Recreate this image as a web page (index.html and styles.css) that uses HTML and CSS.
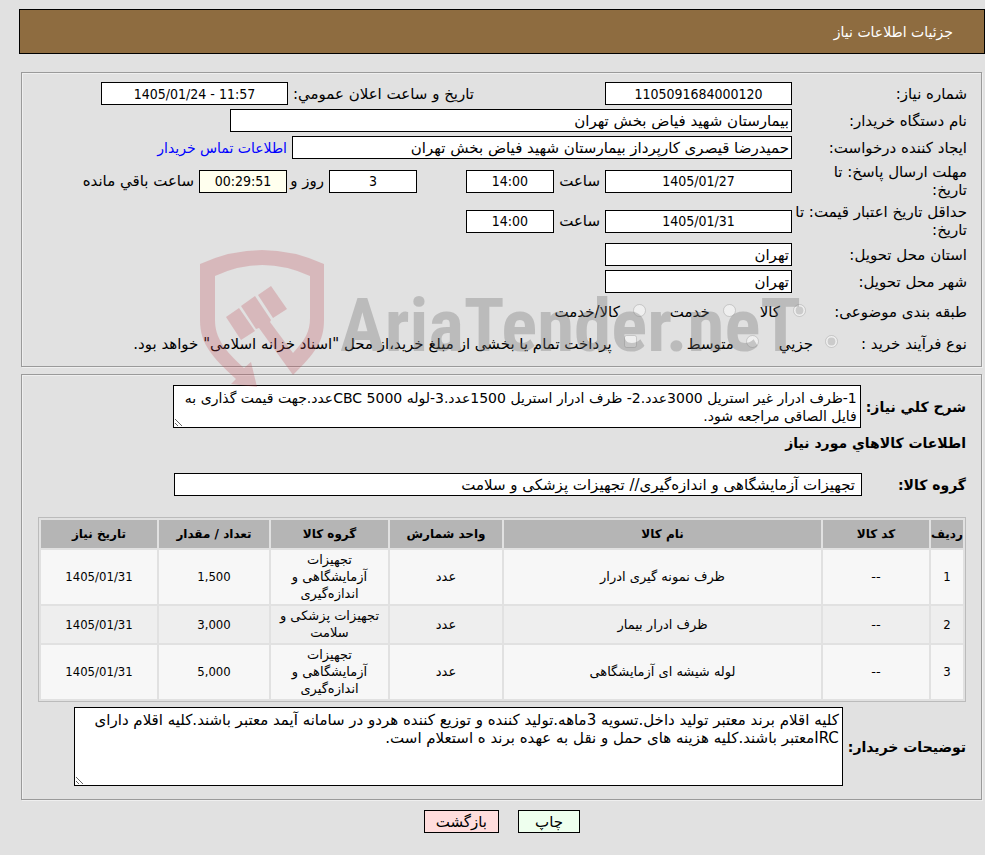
FILE: index.html
```html
<!DOCTYPE html>
<html lang="fa" dir="rtl">
<head>
    <meta charset="UTF-8">
    <meta name="viewport" content="width=device-width, initial-scale=1.0">
    <title>جزئیات اطلاعات نیاز</title>
    <link rel="stylesheet" href="styles.css">
</head>
<body>
    <header class="page-header">
        <h1>جزئیات اطلاعات نیاز</h1>
    </header>

    <form id="needForm">
        <fieldset class="need-info">
            <div class="row">
                <label class="caption" for="needNo">شماره نیاز:</label>
                <input type="text" class="box date" id="needNo" value="1105091684000120" readonly>
                <label class="announce" for="announceDate">تاریخ و ساعت اعلان عمومي:</label>
                <input type="text" class="box date" id="announceDate" value="1405/01/24 - 11:57" dir="ltr" readonly>
            </div>
            <div class="row">
                <label class="caption" for="buyerName">نام دستگاه خریدار:</label>
                <input type="text" class="box buyer" id="buyerName" value="بیمارستان شهید فیاض بخش تهران" readonly>
            </div>
            <div class="row">
                <label class="caption" for="creator">ایجاد کننده درخواست:</label>
                <input type="text" class="box creator" id="creator" value="حمیدرضا قیصری کارپرداز بیمارستان شهید فیاض بخش تهران" readonly>
                <a href="#contact">اطلاعات تماس خریدار</a>
            </div>
            <div class="row row-double">
                <label class="caption" for="replyDate">مهلت ارسال پاسخ: تا<br>تاریخ:</label>
                <input type="text" class="box date" id="replyDate" value="1405/01/27" readonly>
                <label class="unit" for="replyTime">ساعت</label>
                <input type="text" class="box time" id="replyTime" value="14:00" readonly>
                <input type="text" class="box time days" id="daysLeft" value="3" readonly>
                <label class="unit-days" for="daysLeft">روز و</label>
                <input type="text" class="box time countdown" id="timeLeft" value="00:29:51" readonly>
                <label for="timeLeft">ساعت باقي مانده</label>
            </div>
            <div class="row row-double">
                <label class="caption" for="priceDate">حداقل تاریخ اعتبار قیمت: تا<br>تاریخ:</label>
                <input type="text" class="box date" id="priceDate" value="1405/01/31" readonly>
                <label class="unit" for="priceTime">ساعت</label>
                <input type="text" class="box time" id="priceTime" value="14:00" readonly>
            </div>
            <div class="row">
                <label class="caption" for="province">استان محل تحویل:</label>
                <input type="text" class="box place" id="province" value="تهران" readonly>
            </div>
            <div class="row">
                <label class="caption" for="city">شهر محل تحویل:</label>
                <input type="text" class="box place" id="city" value="تهران" readonly>
            </div>
            <div class="row row-options">
                <span class="options-caption">طبقه بندی موضوعی:</span>
                <div class="options options-subject">
                    <span class="option"><input type="radio" id="goods" name="subject" checked disabled><label for="goods">کالا</label></span>
                    <span class="option"><input type="radio" id="service" name="subject" disabled><label for="service">خدمت</label></span>
                    <span class="option"><input type="radio" id="both" name="subject" disabled><label for="both">کالا/خدمت</label></span>
                </div>
            </div>
            <div class="row row-process">
                <span class="process-caption">نوع فرآیند خرید :</span>
                <div class="options options-process">
                    <span class="option"><input type="radio" id="small" name="process" checked disabled><label for="small">جزيي</label></span>
                    <span class="option"><input type="radio" id="medium" name="process" disabled><label for="medium">متوسط</label></span>
                    <span class="option option-treasury"><input type="checkbox" id="treasury" disabled><label for="treasury">پرداخت تمام یا بخشی از مبلغ خرید،از محل "اسناد خزانه اسلامی" خواهد بود.</label></span>
                </div>
            </div>
        </fieldset>

        <fieldset class="need-items">
            <div class="line">
                <label class="title" for="summary">شرح كلي نیاز:</label>
                <textarea class="box summary" id="summary" rows="2" readonly>1-ظرف ادرار غیر استریل 3000عدد.2- ظرف ادرار استریل 1500عدد.3-لوله CBC 5000عدد.جهت قیمت گذاری به فایل الصاقی مراجعه شود.</textarea>
            </div>
            <h2 class="title">اطلاعات کالاهاي مورد نیاز</h2>
            <div class="line line-group">
                <label class="title title-group" for="groupName">گروه کالا:</label>
                <input type="text" class="box group" id="groupName" value="تجهیزات آزمایشگاهی و اندازه‌گیری// تجهیزات پزشکی و سلامت" readonly>
            </div>
            <table class="items">
                <thead>
                    <tr>
                        <th class="col-row">ردیف</th>
                        <th class="col-code">کد کالا</th>
                        <th>نام کالا</th>
                        <th class="col-unit">واحد شمارش</th>
                        <th class="col-group">گروه کالا</th>
                        <th class="col-count">تعداد / مقدار</th>
                        <th class="col-date">تاریخ نیاز</th>
                    </tr>
                </thead>
                <tbody>
                    <tr>
                        <td class="num">1</td>
                        <td>--</td>
                        <td>ظرف نمونه گیری ادرار</td>
                        <td>عدد</td>
                        <td>تجهیزات آزمایشگاهی و اندازه‌گیری</td>
                        <td class="num">1,500</td>
                        <td class="num">1405/01/31</td>
                    </tr>
                    <tr>
                        <td class="num">2</td>
                        <td>--</td>
                        <td>ظرف ادرار بیمار</td>
                        <td>عدد</td>
                        <td>تجهیزات پزشکی و سلامت</td>
                        <td class="num">3,000</td>
                        <td class="num">1405/01/31</td>
                    </tr>
                    <tr>
                        <td class="num">3</td>
                        <td>--</td>
                        <td>لوله شیشه ای آزمایشگاهی</td>
                        <td>عدد</td>
                        <td>تجهیزات آزمایشگاهی و اندازه‌گیری</td>
                        <td class="num">5,000</td>
                        <td class="num">1405/01/31</td>
                    </tr>
                </tbody>
            </table>
            <div class="line">
                <label class="title" for="notes">توضیحات خریدار:</label>
                <textarea class="box notes" id="notes" rows="4" readonly>کلیه اقلام برند معتبر تولید داخل.تسویه 3ماهه.تولید کننده و توزیع کننده هردو در سامانه آیمد معتبر باشند.کلیه اقلام دارای IRCمعتبر باشند.کلیه هزینه های حمل و نقل به عهده برند ه استعلام است.</textarea>
            </div>
        </fieldset>

        <div class="actions">
            <button type="button" class="btn btn-print">چاپ</button>
            <button type="button" class="btn btn-back">بازگشت</button>
        </div>
    </form>

    <div class="watermark" dir="ltr" aria-hidden="true">
        <svg class="watermark-logo" width="126" height="138" viewBox="0 0 126 138">
            <path d="M0 14Q62 -14 124 14V70C124 92 115 103 93 125L59 78L56 79L41 56L55 46L71 70L70 72L93 103C105 90 110 82 110 68V26Q62 4 15 26V70C15 88 25 101 44 118L51 112L57 137L31 134L36 129C12 107 0 94 0 70Z"/>
            <path d="M26 67L39 58L55 81L41 90ZM58 45L71 36L87 59L73 68Z"/>
        </svg>
        <span class="watermark-text">AriaTender.neT</span>
    </div>
</body>
</html>
```
FILE: styles.css
```css
body {
    background-color: #e1e1e1;
    margin: 0;
    padding: 9px 0 20px 19px;
    font-family: "DejaVu Sans", Tahoma, sans-serif;
    font-size: 15px;
    line-height: 18px;
    color: #000;
    position: relative;
}
input, textarea, button {
    font-family: inherit;
    font-size: 15px;
    line-height: 18px;
}
a {
    color: #0000ff;
    font-size: 14px;
    text-decoration: none;
}
.page-header {
    background-color: #8e6c40;
    border: 1px solid #000;
    padding: 13px 31px 12px;
    margin-bottom: 18px;
}
.page-header h1 {
    margin: 0;
    font-size: 14px;
    font-weight: normal;
    color: #fff;
}
fieldset {
    border: 1px solid #9a9a9a;
    box-shadow: inset 1px 1px 0 #efefef, 1px 1px 0 #efefef;
    margin: 0 3px 7px 2px;
    padding: 7px 14px 8px 16px;
    min-width: 0;
}
.row {
    display: flex;
    align-items: center;
    gap: 5px;
    height: 27px;
    white-space: nowrap;
}
.row-double {
    height: 40px;
}
.row-options {
    height: 34px;
}
.row-process {
    height: 29px;
}
.caption {
    width: 170px;
    flex-shrink: 0;
}
.box {
    box-sizing: border-box;
    height: 23px;
    border: 1px solid #000;
    background-color: #fff;
    color: #000;
    margin: 0;
    padding: 1px 2px;
}
.date, .time, .num {
    font-family: "DejaVu Sans Condensed", "DejaVu Sans", Tahoma, sans-serif;
    text-align: center;
}
.date, .time {
    font-size: 14px;
}
.date {
    width: 187px;
}
.time {
    width: 88px;
}
.days {
    margin-right: 44px;
}
.countdown {
    background-color: #ffffee;
}
.unit {
    width: 41px;
}
.unit-days {
    width: 32px;
}
.announce {
    width: 181px;
    margin-right: 126px;
}
.buyer {
    width: 562px;
}
.creator {
    width: 500px;
}
.place {
    width: 187px;
}
.options {
    display: flex;
}
.option {
    display: flex;
    align-items: center;
}
.option input {
    margin: 0 0 4px;
}
.options-caption {
    width: 156px;
}
.process-caption {
    width: 124px;
}
.options-subject {
    gap: 24px;
}
.options-subject .option {
    gap: 13px;
}
.options-process {
    gap: 20px;
}
.options-process .option {
    gap: 12px;
}
.option-treasury {
    margin-right: 30px;
}

/* items section */
.need-items {
    padding: 10px 15px 13px 16px;
}
.line {
    display: flex;
    align-items: center;
    gap: 5px;
}
.title {
    margin: 0;
    font-size: 14px;
    font-weight: bold;
    white-space: nowrap;
}
h2.title {
    padding: 6px 0 21px;
}
.title-group {
    width: 99px;
}
.summary {
    width: 688px;
    height: 43px;
    padding: 3px;
    font-size: 14px;
}
.group {
    width: 688px;
    padding: 1px 6px;
}
.notes {
    width: 769px;
    height: 79px;
    padding: 3px;
}
.items {
    width: 100%;
    table-layout: fixed;
    border: 1px solid #bbb;
    border-spacing: 2px;
    margin: 21px 0 5px;
    font-size: 13px;
    line-height: 17px;
    text-align: center;
}
.items th {
    background-color: #b5b5b5;
    height: 28px;
    padding: 0;
    font-size: 12px;
}
.items td {
    background-color: #f7f7f7;
    padding: 1px 5px 2px;
}
.items tr:nth-child(even) td {
    background-color: #eee;
}
.col-row {
    width: 32px;
}
.col-code {
    width: 106px;
}
.col-unit {
    width: 112px;
}
.col-group {
    width: 117px;
}
.col-count {
    width: 110px;
}
.col-date {
    width: 116px;
}
.actions {
    display: flex;
    justify-content: center;
    gap: 19px;
    padding-top: 3px;
}
.btn {
    height: 23px;
    border: 1px solid #000;
    padding: 0 11px;
    color: #000;
    cursor: pointer;
}
.btn-print {
    background-color: #eeffee;
    width: 62px;
}
.btn-back {
    background-color: #ffdddd;
    width: 75px;
}

/* logo laid over the form */
.watermark {
    position: absolute;
    top: 250px;
    left: 200px;
    display: flex;
    gap: 14px;
    pointer-events: none;
}
.watermark-logo {
    fill: rgba(190, 70, 80, 0.26);
}
.watermark-text {
    padding-top: 38px;
    font-family: "Roboto Condensed", "Liberation Sans", sans-serif;
    font-size: 75px;
    line-height: 75px;
    font-weight: bold;
    color: rgba(110, 110, 110, 0.32);
}
```
